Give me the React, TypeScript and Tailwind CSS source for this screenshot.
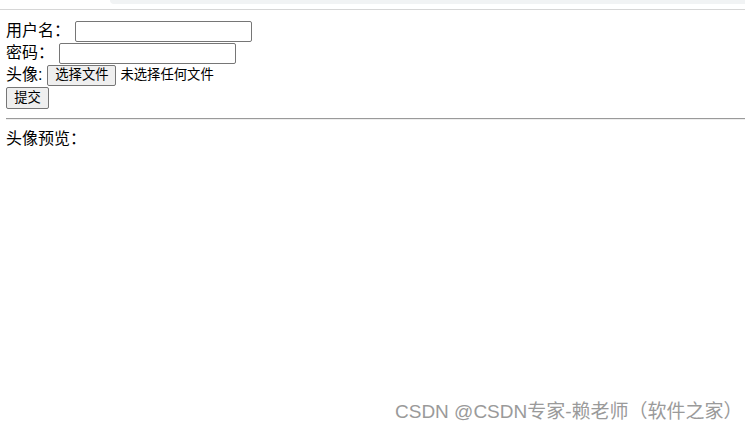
export default function App() {
  const font = { fontFamily: '"Liberation Sans", "Noto Sans CJK SC", sans-serif' };
  return (
    <div className="relative w-[745px] h-[432px] bg-white overflow-hidden text-black" style={font}>
      {/* browser chrome fragment */}
      <div className="h-[9px] flex">
        <div className="w-[110px]" />
        <div className="flex-1 h-[4px] bg-[#f1f3f4] rounded-bl-[10px]" />
      </div>
      <div className="h-px bg-[#d6d6d6]" />

      <form className="pl-[6px] pt-[10px] text-[16px]">
        <div className="flex items-center h-[22px]">
          <span>用户名：</span>
          <input type="text" className="ml-[5px] w-[177px] h-[21px] border border-[#767676] rounded-[2px] bg-white" />
        </div>
        <div className="flex items-center h-[22px]">
          <span>密码：</span>
          <input type="password" className="ml-[5px] w-[177px] h-[21px] border border-[#767676] rounded-[2px] bg-white" />
        </div>
        <div className="flex items-center h-[22px]">
          <span>头像:</span>
          <button type="button" className="ml-[5px] w-[69px] h-[21px] border border-[#767676] rounded-[2px] bg-[#efefef] text-[13.33px] leading-none">选择文件</button>
          <span className="ml-[4px] text-[13.33px]">未选择任何文件</span>
        </div>
        <div className="flex items-center h-[22px] mt-px">
          <button type="button" className="w-[43px] h-[22px] border border-[#767676] rounded-[2px] bg-[#efefef] text-[13.33px] leading-none">提交</button>
        </div>
      </form>

      <hr className="ml-[6px] mt-[9px] border-t border-t-[#9a9a9a] border-b border-b-[#eeeeee]" />

      <div className="pl-[6px] mt-[8px] text-[16px] leading-[22px]">头像预览：</div>

      <div className="absolute left-[395px] top-[399px] text-[19px] leading-[25px] text-[#9a9a9a] whitespace-nowrap">
        CSDN @CSDN专家-赖老师（软件之家）
      </div>
    </div>
  );
}
